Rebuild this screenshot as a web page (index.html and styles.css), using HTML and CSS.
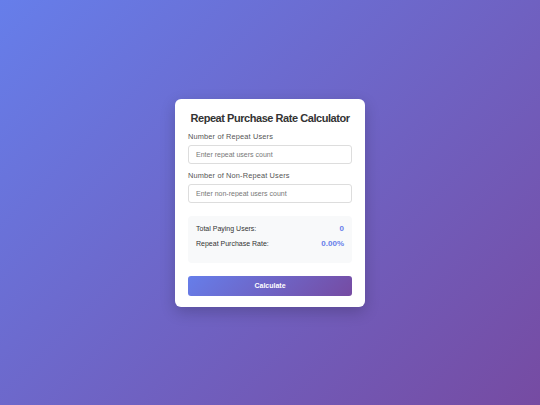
FILE: index.html
```html
<!DOCTYPE html>
<html>
<head>
<meta charset="utf-8">
<link rel="stylesheet" href="styles.css">
</head>
<body>
<div class="card">
  <h1 class="title">Repeat Purchase Rate Calculator</h1>
  <label class="label" for="repeat">Number of Repeat Users</label>
  <input class="input" id="repeat" type="number" placeholder="Enter repeat users count">
  <label class="label" for="nonrepeat">Number of Non-Repeat Users</label>
  <input class="input" id="nonrepeat" type="number" placeholder="Enter non-repeat users count">
  <div class="results">
    <div class="row"><span>Total Paying Users:</span><span class="value">0</span></div>
    <div class="row"><span>Repeat Purchase Rate:</span><span class="value">0.00%</span></div>
  </div>
  <button class="btn">Calculate</button>
</div>
</body>
</html>
```
FILE: styles.css
```css
html, body {
  margin: 0;
  padding: 0;
  height: 100%;
}
body {
  font-family: "Liberation Sans", Arial, sans-serif;
  background: linear-gradient(135deg, #667eea 0%, #764ba2 100%);
  display: flex;
  align-items: center;
  justify-content: center;
}
.card {
  width: 164px;
  padding: 12px 13px 11px;
  background: #fff;
  border-radius: 6px;
  box-shadow: 0 5px 15px rgba(0,0,0,0.2);
  display: flex;
  flex-direction: column;
}
.title {
  margin: 0 0 7px;
  font-size: 11px;
  line-height: 14px;
  font-weight: bold;
  color: #333;
  text-align: center;
  white-space: nowrap;
  letter-spacing: -0.45px;
}
.label {
  font-size: 7.4px;
  line-height: 10px;
  letter-spacing: 0.15px;
  color: #555;
  margin-bottom: 3px;
}
.input {
  box-sizing: border-box;
  width: 100%;
  height: 19px;
  margin: 0 0 7px;
  padding: 0 7px;
  border: 1px solid #ddd;
  border-radius: 3px;
  font-family: inherit;
  font-size: 7px;
  color: #333;
  outline: none;
}
.input::placeholder {
  color: #777;
}
.results {
  margin-top: 6px;
  background: #f8f9fa;
  border-radius: 4px;
  padding: 8.5px 8px 14.5px;
  display: flex;
  flex-direction: column;
  gap: 6px;
}
.row {
  display: flex;
  justify-content: space-between;
  align-items: baseline;
  font-size: 7px;
  line-height: 9px;
  color: #333;
}
.value {
  font-weight: bold;
  color: #667eea;
  font-size: 8px;
}
.btn {
  margin-top: 13px;
  height: 20px;
  border: none;
  border-radius: 3px;
  background: linear-gradient(135deg, #667eea 0%, #764ba2 100%);
  color: #fff;
  font-family: inherit;
  font-weight: bold;
  font-size: 7px;
  padding: 0;
}
```
